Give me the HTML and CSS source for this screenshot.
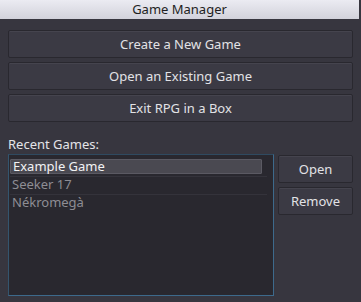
FILE: index.html
```html
<!DOCTYPE html>
<html lang="en">
<head>
    <meta charset="UTF-8">
    <meta name="viewport" content="width=device-width, initial-scale=1.0">
    <title>Game Manager</title>
    <link rel="stylesheet" href="styles.css">
</head>
<body>
    <div class="titlebar">Game Manager</div>
    <div class="content">
        <button class="btn wide">Create a New Game</button>
        <button class="btn wide">Open an Existing Game</button>
        <button class="btn wide">Exit RPG in a Box</button>

        <div class="label">Recent Games:</div>
        <div class="recent">
            <div class="list">
                <div class="row selected"><span>Example Game</span></div>
                <div class="row"><span>Seeker 17</span></div>
                <div class="row"><span>Nékromegà</span></div>
            </div>
            <div class="side">
                <button class="btn small">Open</button>
                <button class="btn small">Remove</button>
            </div>
        </div>
    </div>
</body>
</html>
```

FILE: styles.css
```css
body {
    font-family: "Noto Sans", sans-serif;
    font-size: 13px;
    background-color: #37363f;
    color: #e0e0e4;
    margin: 0;
    padding: 0;
    width: 359px;
    height: 302px;
    overflow: hidden;
}
.titlebar {
    height: 19px;
    line-height: 19px;
    text-align: center;
    color: #1e1e22;
    background: linear-gradient(#ebebf2, #d2d2db);
}
.content {
    display: flex;
    flex-direction: column;
    padding: 11px 6px 0 8px;
    gap: 4px;
}
.btn {
    font-family: "Noto Sans", sans-serif;
    font-size: 13px;
    color: #e2e2e6;
    background-color: #3b3a44;
    border: 1px solid #29282f;
    border-radius: 2px;
    box-shadow: inset 0 1px 0 #45444e;
    padding: 0;
    margin: 0;
    cursor: pointer;
}
.btn:hover {
    background-color: #43424c;
}
.wide {
    height: 28px;
}
.label {
    margin-top: 10px;
    height: 16px;
    line-height: 16px;
    margin-bottom: -2px;
    color: #e4e4e8;
}
.recent {
    display: flex;
    gap: 4px;
}
.list {
    background-color: #29282f;
    border: 1px solid #3d6a8c;
    border-top-color: #2f4a60;
    border-left-color: #34556e;
    padding: 4px 2px 0 1px;
    box-sizing: border-box;
    width: 266px;
    height: 142px;
}
.row {
    height: 17px;
    border-bottom: 1px solid #34333b;
    color: #8e8d94;
    margin-right: 4px;
}
.row:last-child {
    border-bottom: none;
}
.row span {
    display: block;
    height: 15px;
    line-height: 15px;
    padding-left: 2px;
}
.selected span {
    background-color: #4a4951;
    border: 1px solid #5b5a63;
    border-radius: 1px;
    color: #f2f2f4;
    margin-right: 5px;
    height: 13px;
    line-height: 13px;
}
.side {
    display: flex;
    flex-direction: column;
    gap: 4px;
    padding-top: 1px;
    width: 75px;
}
.small {
    height: 28px;
}
```
